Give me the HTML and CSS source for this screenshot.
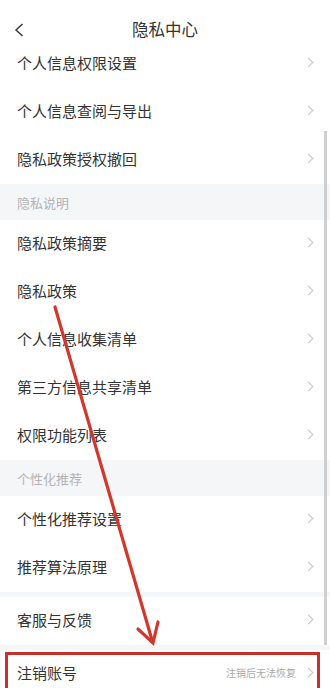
FILE: index.html
```html
<!DOCTYPE html>
<html lang="zh-CN">
<head>
    <meta charset="UTF-8">
    <title>隐私中心</title>

    <link rel="stylesheet" href="styles.css">
</head>
<body>
<main class="page">
    <header class="topbar">
        <span class="back">
            <svg width="10" height="14" viewBox="0 0 10 14"><path d="M8.5 1 L2 7 L8.5 13" fill="none" stroke="#333" stroke-width="1.4"/></svg>
        </span>
        <h1>隐私中心</h1>
    </header>

    <ul class="list">
        <li class="row">个人信息权限设置<i class="chev"></i></li>
        <li class="row">个人信息查阅与导出<i class="chev"></i></li>
        <li class="row">隐私政策授权撤回<i class="chev"></i></li>
        <li class="section">隐私说明</li>
        <li class="row">隐私政策摘要<i class="chev"></i></li>
        <li class="row">隐私政策<i class="chev"></i></li>
        <li class="row">个人信息收集清单<i class="chev"></i></li>
        <li class="row">第三方信息共享清单<i class="chev"></i></li>
        <li class="row">权限功能列表<i class="chev"></i></li>
        <li class="section">个性化推荐</li>
        <li class="row">个性化推荐设置<i class="chev"></i></li>
        <li class="row">推荐算法原理<i class="chev"></i></li>
        <li class="gap"></li>
        <li class="row">客服与反馈<i class="chev"></i></li>
        <li class="gap"></li>
        <li class="row">注销账号<span class="note">注销后无法恢复</span><i class="chev"></i></li>
    </ul>

    <div class="scrollbar"></div>
    <div class="highlight"></div>
    <svg class="arrow" width="330" height="688" viewBox="0 0 330 688">
        <path d="M55 307 L152 640" stroke="#d2372c" stroke-width="3.2" fill="none" stroke-linecap="round"/>
        <path d="M138 629 L153 643 L158 622" stroke="#d2372c" stroke-width="3.2" fill="none" stroke-linejoin="miter" stroke-linecap="round"/>
    </svg>
</main>
</body>
</html>
```

FILE: styles.css
```css
html, body {
    margin: 0;
    padding: 0;
    background: #fff;
    font-family: "Noto Sans CJK SC", "Noto Sans", sans-serif;
}

.page {
    position: relative;
    width: 330px;
    height: 688px;
    overflow: hidden;
}

.topbar {
    height: 40px;
    display: flex;
    align-items: flex-end;
    justify-content: center;
    position: relative;
}

.topbar h1 {
    margin: 0 0 1px;
    font-size: 16.5px;
    font-weight: normal;
    line-height: 20px;
    color: #333;
}

.back {
    position: absolute;
    left: 14px;
    top: 23px;
    line-height: 0;
}

.list {
    list-style: none;
    margin: 0;
    padding: 0;
}

.row {
    height: 44px;
    display: flex;
    align-items: center;
    padding: 0 18px 4px 17px;
    font-size: 15px;
    color: #333;
}

.chev {
    margin-left: auto;
    width: 6px;
    height: 6px;
    border-top: 1.2px solid #c4c4c4;
    border-right: 1.2px solid #c4c4c4;
    transform: rotate(45deg);
}

.note {
    margin-left: auto;
    margin-right: 9px;
    font-size: 10px;
    color: #aaa;
}

.note + .chev {
    margin-left: 0;
}

.section {
    height: 36px;
    display: flex;
    align-items: center;
    padding-left: 17px;
    background: #f4f6f8;
    font-size: 13px;
    color: #b4b4b4;
}

.gap {
    height: 5px;
    background: #f4f6f8;
}

.scrollbar {
    position: absolute;
    left: 324px;
    top: 131px;
    width: 3px;
    height: 514px;
    background: #cfcfcf;
}

.highlight {
    position: absolute;
    left: 5px;
    top: 652px;
    width: 309px;
    height: 50px;
    border: 3px solid #c8312b;
}

.arrow {
    position: absolute;
    left: 0;
    top: 0;
}
```
